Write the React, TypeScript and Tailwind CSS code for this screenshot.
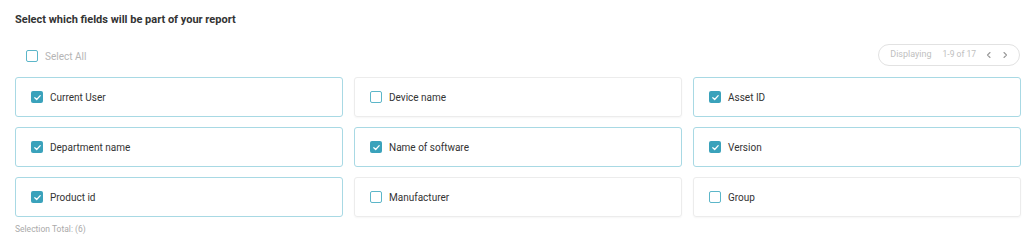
import React from "react";

const fields: { label: string; checked: boolean }[] = [
  { label: "Current User", checked: true },
  { label: "Device name", checked: false },
  { label: "Asset ID", checked: true },
  { label: "Department name", checked: true },
  { label: "Name of software", checked: true },
  { label: "Version", checked: true },
  { label: "Product id", checked: true },
  { label: "Manufacturer", checked: false },
  { label: "Group", checked: false },
];

function Box({ checked }: { checked: boolean }) {
  if (checked) {
    return (
      <span className="flex h-[12px] w-[12px] items-center justify-center rounded-[2px] bg-[#3aa2bb]">
        <svg width="9" height="9" viewBox="0 0 10 10" fill="none">
          <path d="M2 5.2 L4.1 7.2 L8 2.9" stroke="white" strokeWidth="1.4" strokeLinecap="round" strokeLinejoin="round" />
        </svg>
      </span>
    );
  }
  return <span className="block h-[12px] w-[12px] rounded-[2px] border-[1.5px] border-[#5cb6c9] bg-white" />;
}

export default function App() {
  return (
    <div className="h-[240px] w-[1024px] bg-white pl-[15px] pr-[3px] pt-[12px] font-['Roboto',sans-serif]">
      <div className="text-[11px] font-bold leading-[16px] text-[#333]">Select which fields will be part of your report</div>
      <div className="mt-[17px] flex h-[22px] items-center justify-between">
        <div className="flex items-center gap-[7px] pl-[11px]">
          <span className="block h-[12px] w-[12px] rounded-[2px] border-[1.5px] border-[#5cb6c9]" />
          <span className="text-[10px] text-[#b5b5b5]">Select All</span>
        </div>
        <div className="mr-[1px] mt-[-3px] flex h-[22px] items-center rounded-full border border-[#e2e2e2] pl-[11px] pr-[10px] text-[9px] text-[#c0c0c0]">
          <span>Displaying</span>
          <span className="ml-[11px] text-[8.5px]">1-9 of 17</span>
          <svg className="ml-[9px]" width="8" height="8" viewBox="0 0 8 8" fill="none">
            <path d="M5 1.5 L2.5 4 L5 6.5" stroke="#999" strokeWidth="1.1" strokeLinecap="round" strokeLinejoin="round" />
          </svg>
          <svg className="ml-[8px]" width="8" height="8" viewBox="0 0 8 8" fill="none">
            <path d="M3 1.5 L5.5 4 L3 6.5" stroke="#999" strokeWidth="1.1" strokeLinecap="round" strokeLinejoin="round" />
          </svg>
        </div>
      </div>
      <div className="mt-[10px] grid grid-cols-3 gap-x-[11px] gap-y-[10px]">
        {fields.map((f) => (
          <div
            key={f.label}
            className={
              "flex h-[40px] items-center gap-[7px] rounded-[3px] border pl-[15px] " +
              (f.checked
                ? "border-[#a8d9e4]"
                : "border-[#ececec] shadow-[0_1px_2px_rgba(0,0,0,0.04)]")
            }
          >
            <Box checked={f.checked} />
            <span className="text-[10px] text-[#333]">{f.label}</span>
          </div>
        ))}
      </div>
      <div className="mt-[6px] text-[8.5px] text-[#aaa]">Selection Total: (6)</div>
    </div>
  );
}
